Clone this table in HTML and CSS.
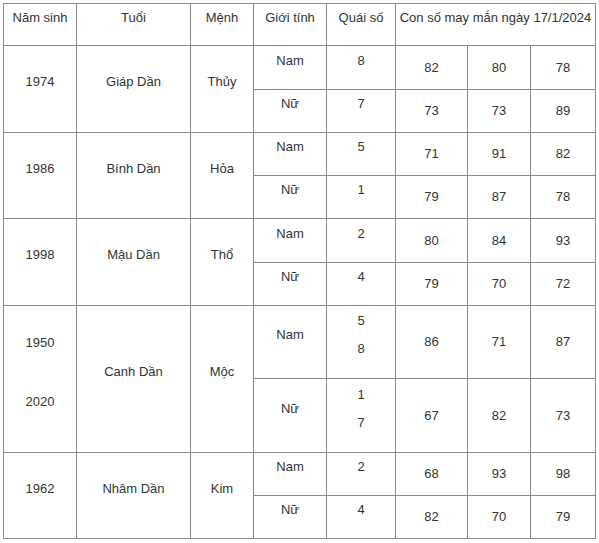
FILE: index.html
```html
<!DOCTYPE html>
<html lang="vi">
<head>
<meta charset="utf-8">
<title>Con số may mắn ngày 17/1/2024</title>
<link rel="stylesheet" href="styles.css">
</head>
<body>
<table class="luck">
  <colgroup>
    <col class="c1"><col class="c2"><col class="c3"><col class="c4"><col class="c5"><col class="c6"><col class="c7"><col class="c8">
  </colgroup>
  <tr class="h-head">
    <td><p>Năm sinh</p></td>
    <td><p>Tuổi</p></td>
    <td><p>Mệnh</p></td>
    <td><p>Giới tính</p></td>
    <td><p>Quái số</p></td>
    <td colspan="3"><p>Con số may mắn ngày 17/1/2024</p></td>
  </tr>

  <tr class="h44">
    <td rowspan="2"><p>1974</p></td>
    <td rowspan="2"><p>Giáp Dần</p></td>
    <td rowspan="2"><p>Thủy</p></td>
    <td><p>Nam</p></td><td><p>8</p></td>
    <td>82</td><td>80</td><td>78</td>
  </tr>
  <tr class="h43">
    <td><p>Nữ</p></td><td><p>7</p></td>
    <td>73</td><td>73</td><td>89</td>
  </tr>

  <tr class="h43">
    <td rowspan="2"><p>1986</p></td>
    <td rowspan="2"><p>Bính Dần</p></td>
    <td rowspan="2"><p>Hỏa</p></td>
    <td><p>Nam</p></td><td><p>5</p></td>
    <td>71</td><td>91</td><td>82</td>
  </tr>
  <tr class="h43">
    <td><p>Nữ</p></td><td><p>1</p></td>
    <td>79</td><td>87</td><td>78</td>
  </tr>

  <tr class="h44">
    <td rowspan="2"><p>1998</p></td>
    <td rowspan="2"><p>Mậu Dần</p></td>
    <td rowspan="2"><p>Thổ</p></td>
    <td><p>Nam</p></td><td><p>2</p></td>
    <td>80</td><td>84</td><td>93</td>
  </tr>
  <tr class="h43">
    <td><p>Nữ</p></td><td><p>4</p></td>
    <td>79</td><td>70</td><td>72</td>
  </tr>

  <tr class="h73">
    <td rowspan="2"><p class="gap">1950</p><p>2020</p></td>
    <td rowspan="2"><p>Canh Dần</p></td>
    <td rowspan="2"><p>Mộc</p></td>
    <td><p>Nam</p></td><td><p>5</p><p>8</p></td>
    <td>86</td><td>71</td><td>87</td>
  </tr>
  <tr class="h74">
    <td><p>Nữ</p></td><td><p>1</p><p>7</p></td>
    <td>67</td><td>82</td><td>73</td>
  </tr>

  <tr class="h43">
    <td rowspan="2"><p>1962</p></td>
    <td rowspan="2"><p>Nhâm Dần</p></td>
    <td rowspan="2"><p>Kim</p></td>
    <td><p>Nam</p></td><td><p>2</p></td>
    <td>68</td><td>93</td><td>98</td>
  </tr>
  <tr class="h43">
    <td><p>Nữ</p></td><td><p>4</p></td>
    <td>82</td><td>70</td><td>79</td>
  </tr>
</table>
</body>
</html>
```

FILE: styles.css
```css
html, body {
  margin: 0;
  padding: 0;
  background: #fff;
}
body {
  font-family: "Liberation Sans", Arial, sans-serif;
  font-size: 13px;
  color: #333;
}
.luck {
  margin: 3px 0 0 3px;
  border-collapse: collapse;
  table-layout: fixed;
  width: 592px;
}
.c1 { width: 73px; }
.c2 { width: 114px; }
.c3 { width: 63px; }
.c4 { width: 73px; }
.c5 { width: 69px; }
.c6 { width: 72px; }
.c7 { width: 63px; }
.c8 { width: 65px; }
.luck td {
  border: 1px solid #888;
  padding: 0;
  text-align: center;
  vertical-align: middle;
  line-height: 14px;
}
.luck p {
  margin: 0 0 14px;
  line-height: 14px;
}
.luck p.gap {
  margin-bottom: 45px;
}
.h-head { height: 42px; }
.h44 { height: 44px; }
.h43 { height: 43px; }
.h73 { height: 73px; }
.h74 { height: 74px; }
```
